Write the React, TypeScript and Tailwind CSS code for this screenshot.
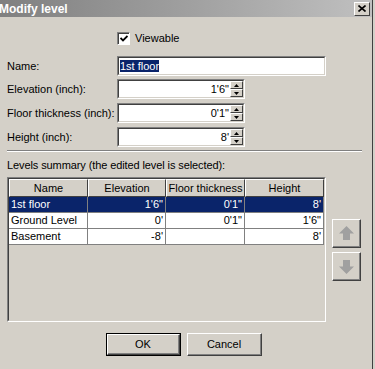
import React from "react";

const font = { fontFamily: '"Liberation Sans", Arial, sans-serif' };

function Spinner({ value }: { value: string }) {
  return (
    <div className="flex h-[20px] w-[128px] border border-t-[#808080] border-l-[#808080] border-r-white border-b-white">
      <div className="flex flex-1 border border-t-[#404040] border-l-[#404040] border-r-[#d4d0c8] border-b-[#d4d0c8] bg-white">
        <div className="flex-1 text-right pr-[1px] leading-[16px]">{value}</div>
        <div className="flex w-[13px] flex-col">
          <SpinBtn up />
          <SpinBtn />
        </div>
      </div>
    </div>
  );
}

function SpinBtn({ up }: { up?: boolean }) {
  return (
    <div className="flex h-[8px] items-center justify-center border border-t-white border-l-white border-r-[#404040] border-b-[#404040] bg-[#d4d0c8]">
      <svg width="5" height="3" viewBox="0 0 5 3">
        {up ? <polygon points="2.5,0 5,3 0,3" fill="#000" /> : <polygon points="0,0 5,0 2.5,3" fill="#000" />}
      </svg>
    </div>
  );
}

function Field({ label, value }: { label: string; value: string }) {
  return (
    <div className="flex items-center h-[20px]">
      <div className="w-[110px]">{label}</div>
      <Spinner value={value} />
    </div>
  );
}

function Btn({ children, isDefault }: { children: React.ReactNode; isDefault?: boolean }) {
  return (
    <div className={`h-[23px] w-[75px] ${isDefault ? "border border-black" : ""}`}>
      <div className="h-full w-full border border-t-white border-l-white border-r-[#404040] border-b-[#404040]">
        <div className="flex h-full w-full items-center justify-center border-r border-b border-r-[#808080] border-b-[#808080]">
          {children}
        </div>
      </div>
    </div>
  );
}

function ArrowBtn({ up }: { up?: boolean }) {
  return (
    <div className="h-[29px] w-[29px] border border-t-white border-l-white border-r-[#404040] border-b-[#404040]">
      <div className="flex h-full w-full items-center justify-center border-r border-b border-r-[#808080] border-b-[#808080]">
        <svg width="17" height="17" viewBox="0 0 17 17" className={up ? "" : "rotate-180"}>
          <polygon points="8.5,1 16,8.5 12,8.5 12,15 5,15 5,8.5 1,8.5" fill="#a0a0a0" />
        </svg>
      </div>
    </div>
  );
}

const rows = [
  ["1st floor", "1'6\"", "0'1\"", "8'"],
  ["Ground Level", "0'", "0'1\"", "1'6\""],
  ["Basement", "-8'", "", "8'"],
];
const widths = ["w-[79px]", "w-[78px]", "w-[79px]", "w-[79px]"];

export default function App() {
  return (
    <div className="flex h-[369px] w-[375px] overflow-hidden bg-[#d4d0c8] text-[11px] text-black" style={font}>
      <div className="flex w-[372px] flex-col">
        {/* Title bar */}
        <div className="flex h-[17px] items-center justify-between bg-gradient-to-r from-[#808080] to-[#c0c0c0] pr-[2px]">
          <span className="-ml-[1px] font-bold text-white text-[12px]">Modify level</span>
          <div className="flex h-[14px] w-[16px] items-center justify-center border border-t-white border-l-white border-r-[#404040] border-b-[#404040] bg-[#d4d0c8]">
            <svg width="8" height="7" viewBox="0 0 8 7">
              <path d="M0.5 0.5 L7.5 6.5 M7.5 0.5 L0.5 6.5" stroke="#000" strokeWidth="1.6" />
            </svg>
          </div>
        </div>

        <div className="flex flex-col px-[7px]">
          <div className="mt-[15px] flex h-[13px] items-center pl-[110px] leading-[13px]">
            <div className="flex h-[13px] w-[13px] items-center justify-center border border-t-[#808080] border-l-[#808080] border-r-white border-b-white bg-white shadow-[inset_1px_1px_0_#404040]">
              <svg width="8" height="7" viewBox="0 0 8 7">
                <path d="M0.5 3 L3 5.5 L7.5 1" stroke="#000" strokeWidth="1.8" fill="none" />
              </svg>
            </div>
            <span className="ml-[5px]">Viewable</span>
          </div>

          <div className="mt-[11px] flex h-[20px] items-center">
            <div className="w-[110px]">Name:</div>
            <div className="flex h-[20px] w-[209px] border border-t-[#808080] border-l-[#808080] border-r-white border-b-white">
              <div className="flex-1 border border-t-[#404040] border-l-[#404040] border-r-[#d4d0c8] border-b-[#d4d0c8] bg-white pl-[1px] leading-[16px]">
                <span className="bg-[#0a246a] text-white">1st floor</span>
              </div>
            </div>
          </div>

          <div className="mt-[3px] flex flex-col gap-[4px]">
            <Field label="Elevation (inch):" value={"1'6\""} />
            <Field label="Floor thickness (inch):" value={"0'1\""} />
            <Field label="Height (inch):" value={"8'"} />
          </div>

          <div className="mt-[3px] h-[2px] w-[355px] border-t border-t-[#808080] border-b border-b-white" />

          <div className="mt-[7px] leading-[13px] tracking-[-0.1px]">Levels summary (the edited level is selected):</div>

          <div className="mt-[5px] flex items-start gap-[6px]">
            <div className="h-[145px] w-[319px] border border-t-[#808080] border-l-[#808080] border-r-white border-b-white">
              <div className="h-full w-full border border-t-[#404040] border-l-[#404040] border-r-[#d4d0c8] border-b-[#d4d0c8]">
                <div className="flex h-[18px]">
                  {["Name", "Elevation", "Floor thickness", "Height"].map((h, i) => (
                    <div
                      key={h}
                      className={`${widths[i]} flex items-center justify-center border border-t-white border-l-white border-r-[#404040] border-b-[#404040]`}
                    >
                      {h}
                    </div>
                  ))}
                </div>
                {rows.map((r, ri) => (
                  <div key={ri} className={`flex h-[16px] ${ri === 0 ? "bg-[#0a246a] text-white" : "bg-white"}`}>
                    {r.map((c, ci) => (
                      <div
                        key={ci}
                        className={`${widths[ci]} border-r border-b border-[#808080] leading-[15px] px-[2px] ${ci === 0 ? "text-left" : "text-right"}`}
                      >
                        {c}
                      </div>
                    ))}
                  </div>
                ))}
              </div>
            </div>
            <div className="mt-[42px] flex flex-col gap-[4px]">
              <ArrowBtn up />
              <ArrowBtn />
            </div>
          </div>

          <div className="mt-[11px] flex gap-[6px] pl-[99px]">
            <Btn isDefault>OK</Btn>
            <Btn>Cancel</Btn>
          </div>
        </div>
      </div>
      <div className="w-[3px] border-l border-l-[#404040] bg-[#d4d0c8]" />
    </div>
  );
}
